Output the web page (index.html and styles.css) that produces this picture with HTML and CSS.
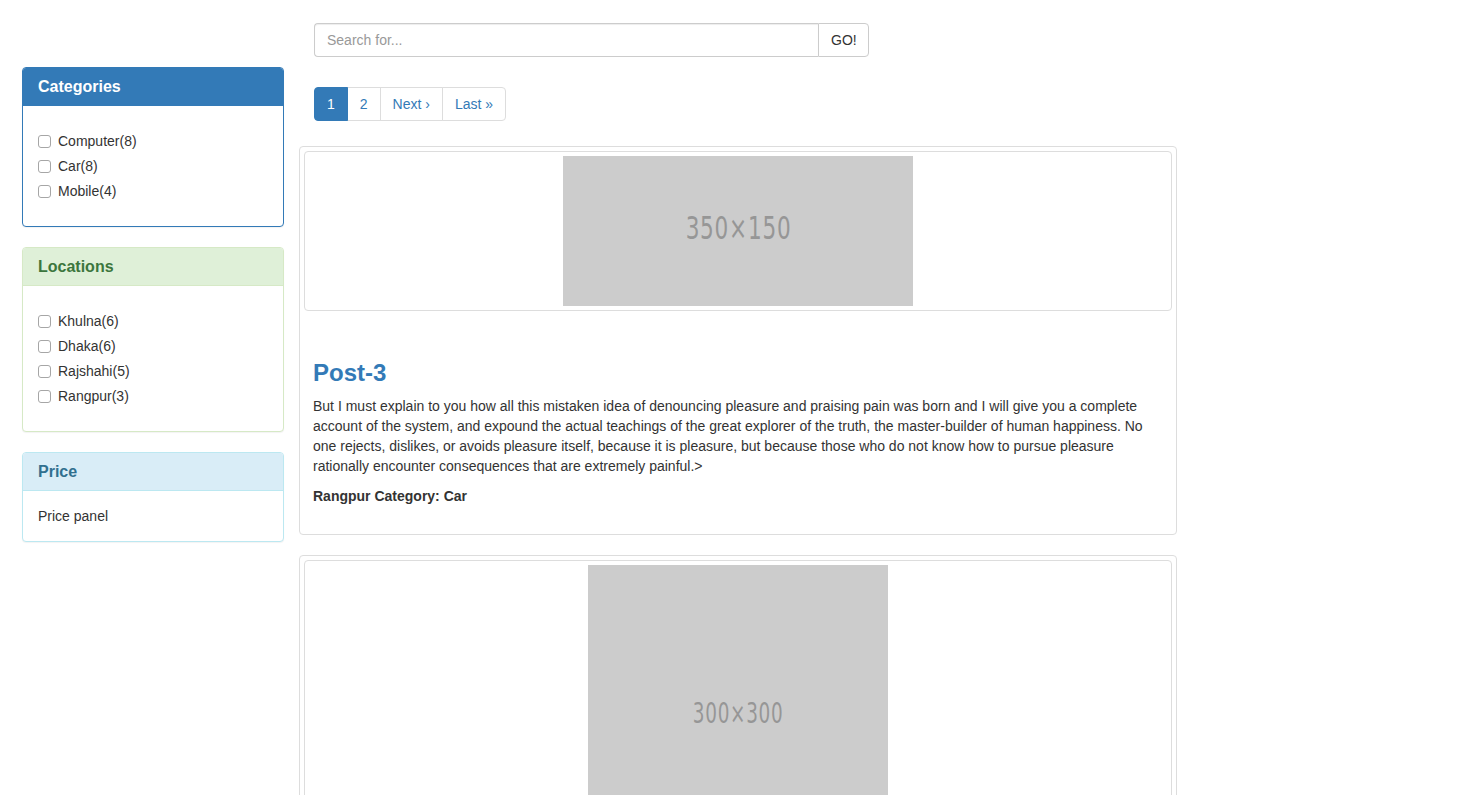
FILE: index.html
```html
<!DOCTYPE html>
<html>
<head>
<meta charset="utf-8">
<title>Posts</title>
<link rel="stylesheet" href="styles.css">
</head>
<body>
<div class="page">
  <aside class="sidebar">
    <div class="panel panel-primary">
      <div class="panel-heading"><h3 class="panel-title">Categories</h3></div>
      <div class="panel-body">
        <div class="checkbox"><label><input type="checkbox">Computer(8)</label></div>
        <div class="checkbox"><label><input type="checkbox">Car(8)</label></div>
        <div class="checkbox"><label><input type="checkbox">Mobile(4)</label></div>
      </div>
    </div>
    <div class="panel panel-success">
      <div class="panel-heading"><h3 class="panel-title">Locations</h3></div>
      <div class="panel-body">
        <div class="checkbox"><label><input type="checkbox">Khulna(6)</label></div>
        <div class="checkbox"><label><input type="checkbox">Dhaka(6)</label></div>
        <div class="checkbox"><label><input type="checkbox">Rajshahi(5)</label></div>
        <div class="checkbox"><label><input type="checkbox">Rangpur(3)</label></div>
      </div>
    </div>
    <div class="panel panel-info">
      <div class="panel-heading"><h3 class="panel-title">Price</h3></div>
      <div class="panel-body price-body">Price panel</div>
    </div>
  </aside>

  <main class="main">
    <div class="search-group">
      <input class="search-input" type="text" placeholder="Search for...">
      <button class="search-btn" type="button">GO!</button>
    </div>

    <ul class="pagination">
      <li class="active"><a>1</a></li>
      <li><a>2</a></li>
      <li><a>Next ›</a></li>
      <li><a>Last »</a></li>
    </ul>

    <div class="thumbnail">
      <div class="thumbnail inner">
        <div class="ph ph-350"><span class="ph-text ph-text-350">350×150</span></div>
      </div>
      <div class="caption">
        <h3 class="post-title">Post-3</h3>
        <p>But I must explain to you how all this mistaken idea of denouncing pleasure and praising pain was born and I will give you a complete account of the system, and expound the actual teachings of the great explorer of the truth, the master-builder of human happiness. No one rejects, dislikes, or avoids pleasure itself, because it is pleasure, but because those who do not know how to pursue pleasure rationally encounter consequences that are extremely painful.&gt;</p>
        <p><b>Rangpur Category: Car</b></p>
      </div>
    </div>

    <div class="thumbnail">
      <div class="thumbnail inner">
        <div class="ph ph-300"><span class="ph-text ph-text-300">300×300</span></div>
      </div>
    </div>
  </main>
</div>
</body>
</html>
```

FILE: styles.css
```css
* { box-sizing: border-box; }

html, body {
  margin: 0;
  padding: 0;
  background: #fff;
}

body {
  font-family: "Liberation Sans", Arial, Helvetica, sans-serif;
  font-size: 14px;
  line-height: 1.42857143;
  color: #333;
}

.page {
  display: flex;
  align-items: flex-start;
  padding-left: 22px;
  padding-top: 23px;
}

/* Sidebar */
.sidebar {
  width: 262px;
  flex: 0 0 262px;
  margin-top: 44px;
}

.panel {
  margin-bottom: 20px;
  background: #fff;
  border: 1px solid transparent;
  border-radius: 4px;
  box-shadow: 0 1px 1px rgba(0, 0, 0, .05);
}

.panel-heading {
  padding: 10px 15px;
  border-bottom: 1px solid transparent;
  border-top-left-radius: 3px;
  border-top-right-radius: 3px;
}

.panel-title {
  margin: 0;
  font-size: 16px;
  font-weight: 600;
  line-height: 17px;
}

.panel-body {
  padding: 15px;
}

.panel-primary { border-color: #337ab7; }
.panel-primary .panel-heading {
  background: #337ab7;
  border-color: #337ab7;
  color: #fff;
}

.panel-success { border-color: #d6e9c6; }
.panel-success .panel-heading {
  background: #dff0d8;
  border-color: #d6e9c6;
  color: #3c763d;
}

.panel-info { border-color: #bce8f1; }
.panel-info .panel-heading {
  background: #d9edf7;
  border-color: #bce8f1;
  color: #31708f;
}

.checkbox {
  margin: 10px 0;
  min-height: 20px;
}

.checkbox + .checkbox {
  margin-top: -5px;
}

.checkbox label {
  display: flex;
  align-items: center;
  min-height: 20px;
  font-size: 14px;
  color: #333;
  cursor: pointer;
}

.checkbox input {
  -webkit-appearance: none;
  appearance: none;
  width: 13px;
  height: 13px;
  margin: 0 7px 0 0;
  border: 1px solid #a6a6a6;
  border-radius: 3px;
  background: #fff;
  flex: 0 0 13px;
}

/* Main column */
.main {
  width: 878px;
  flex: 0 0 878px;
  margin-left: 15px;
}

.search-group {
  display: flex;
  width: 555px;
  height: 34px;
  margin-left: 15px;
}

.search-input {
  flex: 1;
  height: 34px;
  padding: 6px 12px;
  font-family: inherit;
  font-size: 14px;
  color: #555;
  border: 1px solid #ccc;
  border-right: 0;
  border-radius: 4px 0 0 4px;
  box-shadow: inset 0 1px 1px rgba(0, 0, 0, .075);
  outline: none;
}

.search-input::placeholder {
  color: #999;
}

.search-btn {
  width: 51px;
  height: 34px;
  padding: 6px 12px;
  font-family: inherit;
  font-size: 14px;
  color: #333;
  background: #fff;
  border: 1px solid #ccc;
  border-radius: 0 4px 4px 0;
}

.pagination {
  display: flex;
  list-style: none;
  padding: 0;
  margin: 30px 0 25px 15px;
}

.pagination li a {
  display: block;
  padding: 6px 12px;
  line-height: 1.42857143;
  color: #337ab7;
  background: #fff;
  border: 1px solid #ddd;
  margin-left: -1px;
  text-decoration: none;
}

.pagination li:first-child a {
  margin-left: 0;
  border-top-left-radius: 4px;
  border-bottom-left-radius: 4px;
}

.pagination li:last-child a {
  border-top-right-radius: 4px;
  border-bottom-right-radius: 4px;
}

.pagination li.active a {
  background: #337ab7;
  border-color: #337ab7;
  color: #fff;
  position: relative;
  z-index: 2;
}

.thumbnail {
  display: block;
  padding: 4px;
  margin-bottom: 20px;
  background: #fff;
  border: 1px solid #ddd;
  border-radius: 4px;
}

.thumbnail.inner {
  display: flex;
  justify-content: center;
}

.ph {
  background: #cccccc;
  display: flex;
  align-items: center;
  justify-content: center;
  overflow: hidden;
}

.ph-350 { width: 350px; height: 150px; }
.ph-300 { width: 300px; height: 300px; }

.ph-text {
  display: inline-block;
  color: #969696;
  font-family: "DejaVu Sans Condensed", "Liberation Sans", sans-serif;
  white-space: nowrap;
  letter-spacing: 1px;
}

.ph-text-350 {
  font-size: 32px;
  transform: scaleX(0.75);
  margin-top: -4px;
}

.ph-text-300 {
  font-size: 28px;
  transform: scaleX(0.73);
  margin-top: -3px;
}

.caption {
  padding: 9px 9px 14px;
  color: #333;
}

.post-title {
  margin: 20px 0 10px;
  font-size: 24px;
  line-height: 1.1;
  font-weight: 600;
  color: #337ab7;
}

.caption p {
  margin: 0 0 10px;
}
```
